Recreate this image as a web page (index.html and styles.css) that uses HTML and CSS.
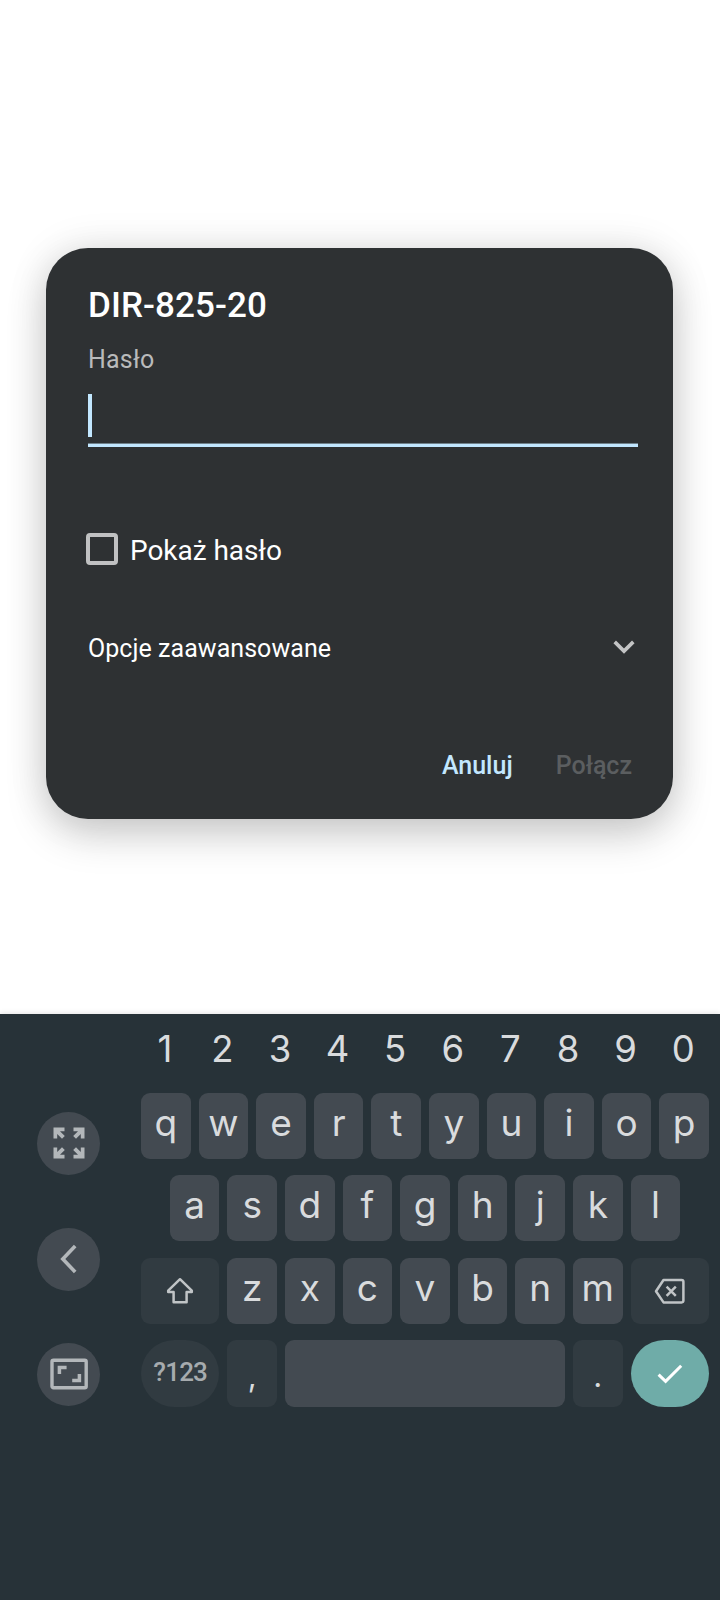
FILE: index.html
```html
<!DOCTYPE html>
<html lang="pl">
<head>
<meta charset="utf-8">
<title>DIR-825-20</title>
<link rel="stylesheet" href="styles.css">
</head>
<body>
<main class="stage">
  <section class="dialog">
    <h1 class="title">DIR-825-20</h1>
    <div class="label">Hasło</div>
    <div class="field"><span class="caret"></span></div>
    <div class="check-row"><span class="checkbox"></span><span class="check-text">Pokaż hasło</span></div>
    <div class="advanced"><span>Opcje zaawansowane</span>
      <svg class="chevron" width="22" height="14" viewBox="0 0 22 14"><path d="M1.7 1.9 11 11.1 20.3 1.9" fill="none" stroke="#c3c4c5" stroke-width="3.6"/></svg>
    </div>
    <div class="actions"><span class="cancel">Anuluj</span><span class="connect">Połącz</span></div>
  </section>
</main>
<section class="keyboard">
  <aside class="side">
    <span class="round"><svg width="32" height="32" viewBox="0 0 32 32"><g fill="#b3b7ba"><path d="M.5.5H11.5V4.2H7L11.8 9 9 11.8 4.2 7V11.5H.5Z"/><path d="M31.5.5H20.5V4.2H25L20.2 9 23 11.8 27.8 7V11.5H31.5Z"/><path d="M.5 31.5H11.5V27.8H7L11.8 23 9 20.2 4.2 25V20.5H.5Z"/><path d="M31.5 31.5H20.5V27.8H25L20.2 23 23 20.2 27.8 25V20.5H31.5Z"/></g></svg></span>
    <span class="round"><svg width="32" height="32" viewBox="0 0 32 32"><path d="M22.2 3 9.8 16 22.2 29" fill="none" stroke="#b3b7ba" stroke-width="3.6"/></svg></span>
    <span class="round"><svg width="38" height="32" viewBox="0 0 38 32"><g fill="none" stroke="#b3b7ba"><rect x="2" y="2.2" width="34.2" height="27.6" rx="1.5" stroke-width="3.4"/><path d="M9.4 16V9.6H16.6M29.4 16v6.4H22.2" stroke-width="3.5"/></g></svg></span>
  </aside>
  <div class="keys">
    <div class="row digits"><span>1</span><span>2</span><span>3</span><span>4</span><span>5</span><span>6</span><span>7</span><span>8</span><span>9</span><span>0</span></div>
    <div class="row"><span class="key">q</span><span class="key">w</span><span class="key">e</span><span class="key">r</span><span class="key">t</span><span class="key">y</span><span class="key">u</span><span class="key">i</span><span class="key">o</span><span class="key">p</span></div>
    <div class="row"><span class="key">a</span><span class="key">s</span><span class="key">d</span><span class="key">f</span><span class="key">g</span><span class="key">h</span><span class="key">j</span><span class="key">k</span><span class="key">l</span></div>
    <div class="row">
      <span class="key dim wide"><svg width="28" height="28" viewBox="0 0 28 28"><path d="M14 2.2 2.2 13.6V15H7.6V25.3H20.6V15H25.8V13.6Z" fill="none" stroke="#c0c4c6" stroke-width="2.5" stroke-linejoin="round"/></svg></span>
      <span class="key">z</span><span class="key">x</span><span class="key">c</span><span class="key">v</span><span class="key">b</span><span class="key">n</span><span class="key">m</span>
      <span class="key dim wide"><svg width="32" height="26" viewBox="0 0 32 26"><g fill="none" stroke="#c0c4c6" stroke-width="2.5" stroke-linejoin="round"><path d="M9.5 2H27.6Q29.4 2 29.4 3.8V22.6Q29.4 24.4 27.6 24.4H9.5L2 13.2Z"/><path d="M12.6 8.6 21.8 17.8M21.8 8.6 12.6 17.8"/></g></svg></span>
    </div>
    <div class="row last">
      <span class="key dim wide pill symbols">?123</span><span class="key dim punct">,</span><span class="key space"></span><span class="key dim punct">.</span>
      <span class="key wide pill enter"><svg width="26" height="20" viewBox="0 0 26 20"><path d="M1.6 10.6 8.6 17.4 24.2 1.8" fill="none" stroke="#fff" stroke-width="3"/></svg></span>
    </div>
  </div>
</section>
</body>
</html>
```
FILE: styles.css
```css
* { box-sizing: border-box; }
body { margin: 0; width: 720px; height: 1600px; overflow: hidden; background: #fff; font-family: Roboto, "Liberation Sans", sans-serif; }
.stage { height: 1014px; padding: 248px 47px 0 46px; }
.dialog { height: 571px; padding: 38px 35px 0 42px; border-radius: 42px; background: #2e3133; color: #fff; box-shadow: 0 16px 40px rgba(0,0,0,.18), 0 0 40px rgba(0,0,0,.1); }
.title { margin: 0; font-size: 35px; line-height: 40px; font-weight: 500; letter-spacing: .1px; }
.label { margin-top: 19px; font-size: 25px; line-height: 30px; letter-spacing: .2px; color: #b9babb; }
.field { margin-top: 19px; height: 53px; border-bottom: 3px solid #c2e7ff; box-shadow: inset 0 -1px #70818b; }
.caret { display: block; width: 4px; height: 43px; background: #c2e7ff; }
.check-row { display: flex; margin: 86px 0 0 -2px; height: 32px; }
.checkbox { width: 32px; height: 32px; border: 4px solid #c0c1c2; border-radius: 4px; }
.check-text { padding: 2px 0 0 12px; font-size: 28px; line-height: 32px; letter-spacing: -.05px; }
.advanced { display: flex; justify-content: space-between; margin-top: 69px; height: 30px; font-size: 25px; line-height: 30px; letter-spacing: .05px; }
.chevron { margin: 6px 3px 0 0; }
.actions { display: flex; justify-content: flex-end; gap: 43px; margin-top: 87px; padding-right: 6px; font-size: 25px; line-height: 30px; font-weight: 500; }
.cancel { color: #c2e7ff; }
.connect { color: #5b5e60; }
.keyboard { display: flex; height: 586px; background: #273238; box-shadow: 0 0 6px rgba(0,0,0,.14); color: #d9dbdd; font-family: Inter, Roboto, sans-serif; }
.side { display: flex; flex-direction: column; gap: 52.5px; width: 141px; padding: 98px 0 0 37px; }
.round { display: flex; align-items: center; justify-content: center; width: 63px; height: 63px; border-radius: 50%; background: #434a51; }
.round svg { margin-top: -1px; }
.keys { width: 568px; padding-top: 15px; }
.row { display: flex; justify-content: center; gap: 8px; margin-bottom: 16.4px; font-size: 37px; }
.digits { margin-bottom: 24px; line-height: 40px; font-size: 36.5px; }
.digits span { width: 49.6px; padding-right: 2px; text-align: center; }
.key { display: flex; align-items: center; justify-content: center; width: 49.6px; height: 66px; padding-bottom: 7px; border-radius: 9px; background: #434a51; }
.dim { background: #313b41; }
.wide { width: 78.4px; padding: 0; }
.last .key { height: 67px; }
.pill { border-radius: 34px; }
.symbols { padding-bottom: 3px; color: #a6abae; font-family: Roboto, sans-serif; font-size: 26px; font-weight: 500; letter-spacing: -.8px; }
.punct { padding: 4px 0 0; font-size: 31px; }
.space { width: 280px; }
.enter { background: #6faca8; }
```
